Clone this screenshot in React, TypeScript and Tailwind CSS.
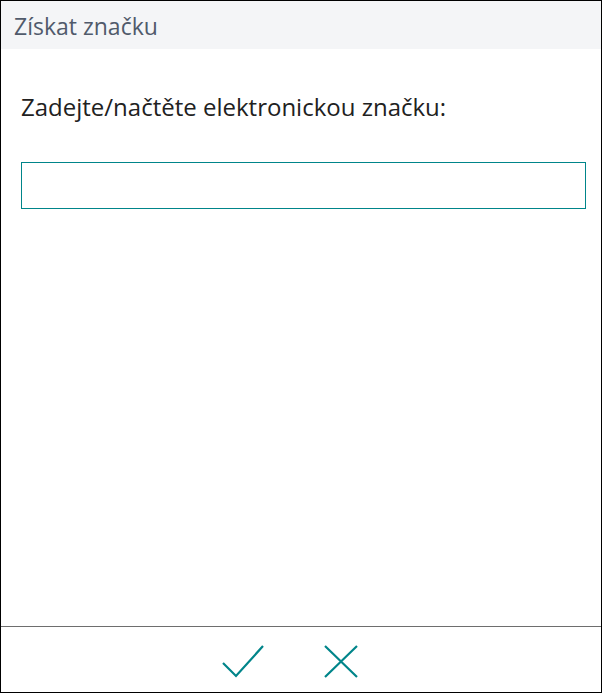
import React from 'react';

export default function App() {
  return (
    <div className="h-[693px] w-[602px] bg-white" style={{ fontFamily: '"Open Sans", "Noto Sans", sans-serif' }}>
      <div className="flex h-full flex-col border border-black">
        {/* Header */}
        <div className="flex h-[48px] shrink-0 items-center bg-[#f4f5f7] pl-[13px] pt-[2px]">
          <h1 className="text-[23px] leading-none text-[#505a6b]">Získat značku</h1>
        </div>

        {/* Body */}
        <div className="flex-1 pl-[20px] pr-[15px] pt-[42px]">
          <label className="block text-[24px] leading-[32px] text-[#212121]">
            Zadejte/načtěte elektronickou značku:
          </label>
          <input
            type="text"
            className="mt-[39px] block h-[47px] w-full border border-[#00858a] bg-white px-2 outline-none"
          />
        </div>

        {/* Footer */}
        <div className="flex h-[66px] shrink-0 items-start justify-center gap-[60px] border-t border-[#6e6e6e] pr-[22px] pt-[18px]">
          <button aria-label="OK" className="block">
            <svg width="42" height="33" viewBox="0 0 42 33" fill="none" stroke="#00858a" strokeWidth="2.2" className="block">
              <path d="M1 18 L14 31 L41 1" />
            </svg>
          </button>
          <button aria-label="Cancel" className="block">
            <svg width="34" height="33" viewBox="0 0 34 33" fill="none" stroke="#00858a" strokeWidth="2.2" className="block">
              <path d="M1 1 L33 32 M33 1 L1 32" />
            </svg>
          </button>
        </div>
      </div>
    </div>
  );
}
